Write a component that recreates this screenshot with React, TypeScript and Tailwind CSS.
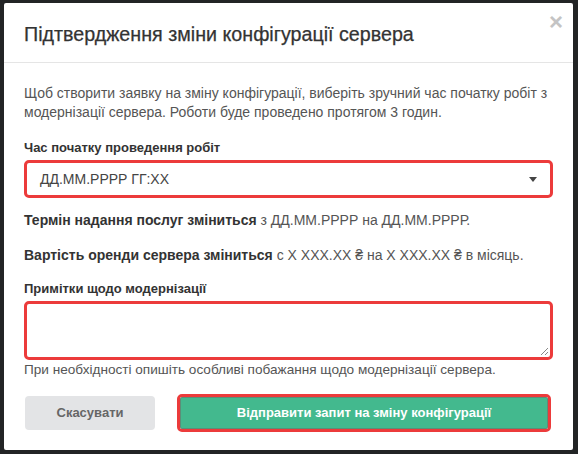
import React from "react";

export default function App() {
  return (
    <div className="min-h-screen w-full bg-[#222425] pl-[4px] pt-[3px]" style={{ fontFamily: '"Liberation Sans", Arial, sans-serif' }}>
      <div className="w-[569px] h-[447px] bg-white rounded-[2px] flex flex-col">
        <div className="relative h-[60px] border-b border-[#e5e5e5] px-[20px] flex items-center">
          <h1 className="text-[19.7px] leading-[24px] text-[#333] pt-[2px] [-webkit-text-stroke:0.25px_#333]">Підтвердження зміни конфігурації сервера</h1>
          <span className="absolute right-[10px] top-[7px] text-[24px] font-bold text-[#c4c4c4] leading-[24px]">×</span>
        </div>
        <div className="px-[20px] pt-[21px] flex flex-col">
          <p className="text-[14px] leading-[19px] text-[#555]">
            Щоб створити заявку на зміну конфігурації, виберіть зручний час початку робіт з модернізації сервера. Роботи буде проведено протягом 3 годин.
          </p>
          <label className="mt-[18px] text-[13px] leading-[16px] font-bold text-[#333]">Час початку проведення робіт</label>
          <div className="mt-[4px] h-[38px] border-[3px] border-[#ec3b3b] rounded-[5px] flex items-center justify-between pl-[13px] pr-[13px]">
            <span className="text-[14px] text-[#444]">ДД.ММ.РРРР ГГ:ХХ</span>
            <span className="w-0 h-0 border-l-[4px] border-r-[4px] border-t-[5px] border-l-transparent border-r-transparent border-t-[#444]"></span>
          </div>
          <p className="mt-[13px] text-[14px] leading-[18px] text-[#555]">
            <b className="text-[#333]">Термін надання послуг зміниться</b> з ДД.ММ.РРРР на ДД.ММ.РРРР.
          </p>
          <p className="mt-[17px] text-[14px] leading-[18px] text-[#555]">
            <b className="text-[#333]">Вартість оренди сервера зміниться</b> с Х ХХХ.ХХ ₴ на Х ХХХ.ХХ ₴ в місяць.
          </p>
          <label className="mt-[17px] text-[13px] leading-[16px] font-bold text-[#333]">Примітки щодо модернізації</label>
          <div className="mt-[4px] relative h-[59px] border-[3px] border-[#ec3b3b] rounded-[5px]">
            <svg className="absolute right-[1px] bottom-[1px]" width="10" height="10" viewBox="0 0 10 10">
              <line x1="9" y1="2" x2="2" y2="9" stroke="#888" strokeWidth="1" />
              <line x1="9" y1="6" x2="6" y2="9" stroke="#888" strokeWidth="1" />
            </svg>
          </div>
          <p className="mt-[2px] text-[13.6px] leading-[16px] text-[#555]">
            При необхідності опишіть особливі побажання щодо модернізації сервера.
          </p>
          <div className="mt-[16px] flex items-center">
            <button className="ml-[1px] w-[130px] h-[34px] rounded-[4px] bg-[#e3e4e6] text-[13px] font-bold text-[#666]">Скасувати</button>
            <div className="ml-[22px] w-[374px] h-[38px] border-[3px] border-[#ec3b3b] rounded-[5px] p-0">
              <button className="w-full h-full bg-[#43b98e] border border-[#5b8e78] rounded-[2px] text-[13px] font-bold text-white">Відправити запит на зміну конфігурації</button>
            </div>
          </div>
        </div>
      </div>
    </div>
  );
}
